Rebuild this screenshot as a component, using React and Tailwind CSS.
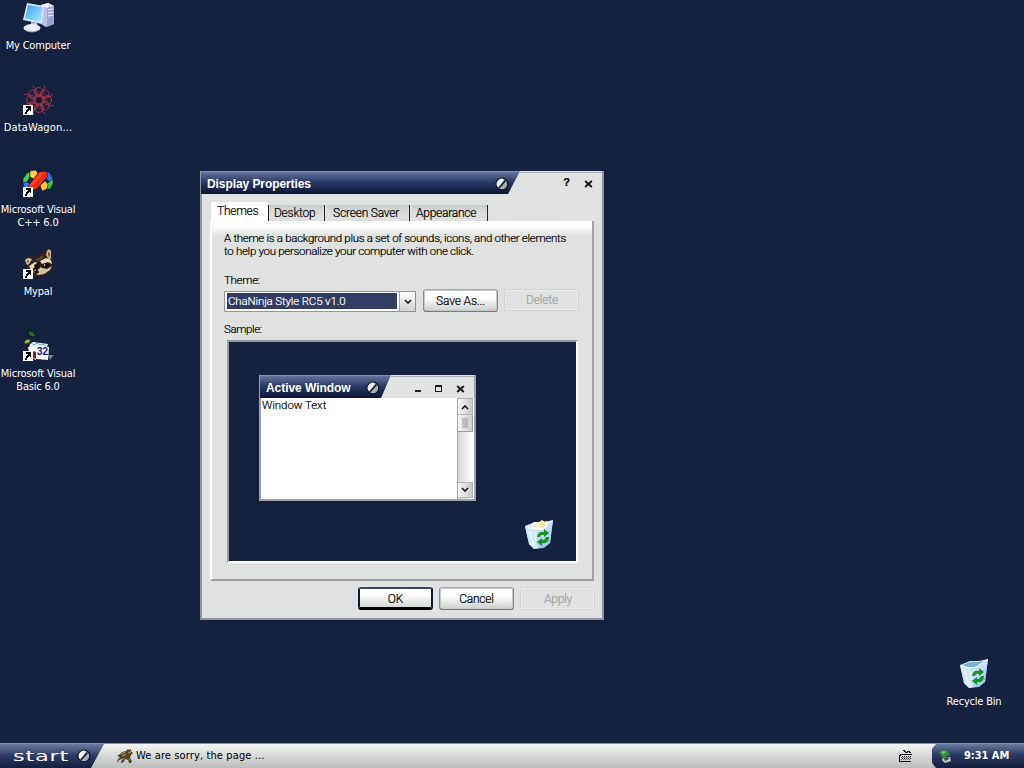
import React from "react";

const TAHOMA = "font-['DejaVu_Sans_Condensed','DejaVu_Sans',sans-serif] font-stretch-condensed";

function ShortcutArrow() {
  return (
    <g shapeRendering="crispEdges">
      <rect x="1" y="21" width="10" height="10" fill="#fff" />
      <path d="M4 22h5v5h-1v-1h-1v1h-1v1h-1v2h-2v-2h1v-2h1v-1h1v-1h-2z" fill="#000" />
    </g>
  );
}

function ComputerIcon() {
  return (
    <svg width="32" height="32" viewBox="0 0 32 32">
      <defs>
        <linearGradient id="scr" x1="0" y1="0" x2="1" y2="1">
          <stop offset="0" stopColor="#3f9cf0" />
          <stop offset="1" stopColor="#a6ecff" />
        </linearGradient>
      </defs>
      <path d="M19 3l7-2 6 3v18l-8 3-5-3z" fill="#b9bfea" />
      <path d="M19 3l7-2 6 3-7 2z" fill="#eef0ff" />
      <path d="M25 6l7-2v18l-7 3z" fill="#9aa2d8" />
      <path d="M26 8l5-1M26 11l5-1M26 14l5-1" stroke="#f1f3ff" strokeWidth="1.2" />
      <path d="M5 1l17 3-2 18L1 18z" fill="#dfe9fb" />
      <path d="M6 3l14.500 2.300-1.700 14.500L3 16.500z" fill="url(#scr)" />
      <path d="M9 20l6 1 1 4-7-1z" fill="#b8c5ec" />
      <ellipse cx="10" cy="26" rx="8.500" ry="4" fill="#e9edfb" />
      <path d="M3 28q7 4 14 0" stroke="#8c9bd0" fill="none" />
    </svg>
  );
}

function DataWagonIcon() {
  const angles = [0, 45, 90, 135, 180, 225, 270, 315];
  return (
    <svg width="32" height="32" viewBox="0 0 32 32">
      <circle cx="17" cy="16" r="11" fill="#4a1f38" opacity="0.400" />
      <g fill="none" stroke="#a5384b" strokeWidth="0.900">
        {angles.map((a) => (
          <g key={a} transform={`rotate(${a} 17 16)`}>
            <circle cx="17" cy="8" r="4.500" />
            <path d="M13 4l-2.500-2M17 12l6-7M14 11h6" />
          </g>
        ))}
      </g>
      <circle cx="17" cy="16" r="2.600" fill="#1b1830" />
      <ShortcutArrow />
    </svg>
  );
}

function VisualCIcon() {
  return (
    <svg width="32" height="32" viewBox="0 0 32 32">
      <g stroke="#0a0f1c" strokeWidth="0.500">
        <path d="M1 13l4-6 3-1v5l-3 5-4 1z" fill="#3fcf52" />
        <path d="M1 17l4-1 4 3-2 4-5-2z" fill="#3a7ff0" />
        <path d="M8 5l6-1 2 4-4 5-4-2z" fill="#ffd052" />
        <path d="M24 5l4 2 3 6-3 3-5-4z" fill="#3272e6" />
        <path d="M31 13v5l-3 5-3 0v-5l3-3z" fill="#35c94a" />
        <path d="M18 19l5-4 3 3-1 5-5 2z" fill="#fcc545" />
        <path d="M6 20L17 6l7-1 2 5-11 13-6 1z" fill="#ed2815" />
      </g>
      <path d="M7 20L18 6.500l5-.5-11 13z" fill="#f9412a" />
      <ShortcutArrow />
    </svg>
  );
}

function RaccoonHead() {
  return (
    <g>
      <path d="M4 19l-2-6 2-4 6 1 6-4 6-1 5-5 3 2v11l1 6-4 6-9 4-8-1z" fill="#33251d" />
      <path d="M25 3l2-2 2 2v7l-2 2-3-5z" fill="#cfb695" />
      <path d="M26 5l1-1 1 3-1 3z" fill="#50392b" />
      <path d="M3 12l3-2 4 1-3 5-2 1z" fill="#d6c09d" />
      <path d="M5 13l2-1-1 3z" fill="#4a3528" />
      <path d="M7 18l6-4 3 1-3 4-4 3z" fill="#e9dac0" />
      <path d="M18 13l6-3 5 2 1 4-4-2-6 2z" fill="#eadbbe" />
      <path d="M16 18l4 2 5 1 5-3-2 4-6 4-6 1-5-3z" fill="#dac29c" />
      <path d="M12 17l5-3 1 6-4 3z" fill="#14110f" />
      <path d="M19 17l6-2 4 2-5 3z" fill="#15110e" />
      <circle cx="22.500" cy="17" r="0.800" fill="#fff" />
      <path d="M12 23l4-1 1 3-4 1z" fill="#181413" />
      <path d="M13 12l6-4 3 0-5 5z" fill="#594231" />
    </g>
  );
}

function MypalIcon() {
  return (
    <svg width="32" height="32" viewBox="0 0 32 32">
      <RaccoonHead />
      <ShortcutArrow />
    </svg>
  );
}

function RunningRaccoon() {
  return (
    <svg width="16" height="16" viewBox="0 0 16 16">
      <path d="M0 8l3-2 2-2 4-1 2-2 1 1 2-1v2l2 2-2 2-1 3 2 3-1 2h-2l-1-3-3-1-1 3-3 1v-1l1-3-3 1-1 2H0l1-3 2-2z" fill="#55452a" />
      <path d="M4 6l4-2M5 8l4-2M11 4l2 1M5 12l2-2M12 11l1 1" stroke="#b5a06c" />
      <path d="M13 4h1" stroke="#f2e7c6" />
    </svg>
  );
}

function VisualBasicIcon() {
  return (
    <svg width="32" height="32" viewBox="0 0 32 32">
      <path d="M6 1l5 1 3 4-3 1-4-2z" fill="#2a6a30" stroke="#07150a" strokeWidth="0.700" />
      <path d="M2 12l3-3 4 1-2 3-4 1z" fill="#a5b545" stroke="#1b240b" strokeWidth="0.700" />
      <path d="M26 25h6l-4 5z" fill="#777b84" />
      <path d="M8 14l3-2 15 2-1 3-18 2z" fill="#eef8fb" />
      <path d="M9 13l3 2 3-2 3 2 3-1 3 2" stroke="#54a7bd" fill="none" />
      <path d="M6 17l8-1v14l-6-3z" fill="#f6f7f8" />
      <path d="M10 21l5 1v7l-5-1z" fill="#74252c" />
      <path d="M14 15l13 2-1 13-12-1z" fill="#fff" />
      <text x="15" y="25" fontSize="10" fontWeight="700" textLength="11" lengthAdjust="spacingAndGlyphs" fontFamily="Liberation Sans, sans-serif" fill="#161477">32</text>
      <ShortcutArrow />
    </svg>
  );
}

function RecycleIcon({ full }) {
  return (
    <svg width="32" height="32" viewBox="0 0 32 32">
      <defs>
        <linearGradient id="bin" x1="0" y1="0" x2="1" y2="1">
          <stop offset="0" stopColor="#ddf6ff" />
          <stop offset="0.550" stopColor="#c3ddf8" />
          <stop offset="1" stopColor="#8db8e9" />
        </linearGradient>
      </defs>
      <path d="M2 7l10-4 9 0 9-2-3 23-6 4-9 1-6-4z" fill="url(#bin)" />
      {!full && <path d="M4 7l9-3 8 0 7-1-8 6-7 1z" fill="#78b0da" />}
      <path d="M2 7q10 4 16 2l12-8-3 23-6 5-10 1-5-5z" fill="url(#bin)" fillOpacity="0.900" />
      <path d="M3 8q9 3 15 1l11-7" fill="none" stroke="#fff" />
      {full && (
        <g>
          <path d="M8 6l3-3 4 1 4-3 3 2 2-1 1 5-6 4-10-1z" fill="#fbfaf3" />
          <path d="M16 4l5-2 2 4-6 3z" fill="#ffe187" />
          <path d="M10 6l4-1 1 3-4 1z" fill="#fff1bd" />
        </g>
      )}
      <path d="M7 12l3 14M12 13l1 9" stroke="#f2faff" strokeWidth="2" opacity="0.700" />
      <path d="M6 25l5-4 5 8-5 1z" fill="#edf5ff" opacity="0.700" />
      <path d="M14 18q1-6 7-5v-3l5 4-5 4v-2q-3-1-4 2z" fill="#159126" />
      <path d="M26 18q0 7-7 6v3l-5-4 5-4v2q3 0 4-3z" fill="#159126" />
    </svg>
  );
}

function Emblem() {
  return (
    <svg width="14" height="14" viewBox="0 0 14 14" className="shrink-0">
      <circle cx="7" cy="7" r="6.500" fill="#0d1322" />
      <circle cx="7" cy="7" r="5.200" fill="#a3abb7" />
      <path d="M2.300 9.500A5.200 5.200 0 0 1 9 2.200L4.500 10z" fill="#f0f3f5" />
      <path d="M10.500 3.500L4 10.800" stroke="#121929" strokeWidth="1.700" />
    </svg>
  );
}

function DesktopIcon({ icon, children, tracking = "tracking-[-0.2px]" }) {
  return (
    <div className="flex h-[82px] w-[76px] flex-col items-center pt-[2px]">
      {icon}
      <div className={`mt-[5px] whitespace-pre text-center text-[11px] leading-[13px] text-white ${tracking} ${TAHOMA}`}>
        {children}
      </div>
    </div>
  );
}

function Cross() {
  return (
    <svg width="9" height="8" viewBox="0 0 9 8">
      <path d="M1.200 1l6.600 6M7.800 1L1.200 7" stroke="#17191c" strokeWidth="2" />
    </svg>
  );
}

function Chevron({ up }) {
  return (
    <svg width="8" height="6" viewBox="0 0 8 6" className={up ? "rotate-180" : ""}>
      <path d="M1 1l3 3 3-3" fill="none" stroke="#17191c" strokeWidth="1.600" />
    </svg>
  );
}

function Caption({ title, className }) {
  return (
    <div className={`flex items-center justify-between border-t border-[#8290ac] bg-linear-to-b from-[#65749a] via-[#2c3b67] via-45% to-[#0c1533] ${className}`}>
      <span className="whitespace-nowrap font-['Liberation_Sans',Arial,sans-serif] text-[12px] font-bold text-white [-webkit-text-stroke:0]">{title}</span>
      <Emblem />
    </div>
  );
}

function Button({ children, kind, className = "" }) {
  const kinds = {
    default: "border-2 border-t-[#3d4672] border-x-[#111a35] border-b-[3px] border-b-black bg-linear-to-b from-white from-30% to-[#d5d9d8] pt-px text-black",
    normal: "border border-[#858b8e] border-t-[#a4a9ac] border-b-2 border-b-[#74797c] bg-linear-to-b from-white from-40% to-[#ced2d1] pt-px text-black outline-1 -outline-offset-2 outline-[#c3c8ca]",
    disabled: "border border-[#d0d4d3] bg-[#dfe2e1] pl-px text-[#a0a4a3] outline-1 -outline-offset-2 outline-[#e9ecec]",
  };
  return (
    <div className={`flex w-[75px] items-center justify-center rounded-[3px] text-[12px] ${kinds[kind]} ${className}`}>
      {children}
    </div>
  );
}

function Tab({ children, className }) {
  return (
    <div className={`flex h-[16px] items-center border-r border-[#222628] bg-linear-to-b from-[#c8cccb] to-[#dcdfde] to-60% whitespace-nowrap ${className}`}>
      {children}
    </div>
  );
}

function SampleWindow() {
  return (
    <div className="absolute left-[30px] top-[33px] flex h-[126px] w-[217px] flex-col border-2 border-t-0 border-[#9ba2a9] bg-[#e0e3e2]">
      <div className="-ml-px flex h-[23px] justify-between">
        <Caption title="Active Window" className="w-[131px] pl-[6px] pr-[11px] pt-px tracking-[-0.05px] [clip-path:polygon(0_0,100%_0,calc(100%-10px)_100%,0_100%)]" />
        <div className="mt-px flex flex-1 items-center justify-end gap-[14px] border-t border-[#a9afb5] pr-[9px] pt-[2px]">
          <div className="mt-[5px] h-[2px] w-[6px] bg-[#222]" />
          <div className="h-[7px] w-[7px] border border-t-2 border-[#17191c]" />
          <Cross />
        </div>
      </div>
      <div className="flex flex-1 bg-white">
        <div className="flex-1 pl-px text-[11.500px] leading-[14px] tracking-[-0.05px]">Window Text</div>
        <div className="mr-px flex w-[16px] flex-col border-l border-[#a4a9a9] bg-linear-to-r from-[#d5d8d7] to-white">
          <div className="flex h-[17px] items-center justify-center border border-l-0 border-[#b1b5b4] bg-linear-to-r from-[#f4f5f5] to-[#c8cccb]"><Chevron up /></div>
          <div className="flex h-[17px] items-center justify-center border-b border-r border-[#999e9d] bg-linear-to-r from-[#f4f5f5] to-[#ccd0cf]">
            <div className="h-[10px] w-[6px] bg-[radial-gradient(circle,#8d9392_0.6px,transparent_0.8px)] bg-size-[2px_2px]" />
          </div>
          <div className="flex-1" />
          <div className="mb-px flex h-[16px] items-center justify-center border border-l-0 border-[#b1b5b4] bg-linear-to-r from-[#f4f5f5] to-[#c8cccb]"><Chevron /></div>
        </div>
      </div>
    </div>
  );
}

function DisplayProperties() {
  return (
    <div className="absolute left-[200px] top-[171px] flex h-[449px] w-[404px] flex-col border-2 border-t-0 border-[#8f969f] bg-[#dfe2e1] font-[Roboto,'Liberation_Sans',sans-serif] text-[12px] font-light text-black [-webkit-text-stroke:0.2px_currentColor]">
      <div className="-ml-px flex h-[23px]">
        <Caption title="Display Properties" className="w-[319px] pl-[6px] pr-[11px] pt-px tracking-[-0.08px] [clip-path:polygon(0_0,100%_0,calc(100%-12px)_100%,0_100%)]" />
        <div className="mt-px flex flex-1 items-center justify-end gap-[14px] border-t border-[#a5abb0] pr-[9px] pt-px">
          <span className="pb-[3px] font-['Liberation_Sans',Arial,sans-serif] text-[11px] font-bold leading-none">?</span>
          <Cross />
        </div>
      </div>
      <div className="ml-[9px] mt-[8px] flex h-[19px] items-end gap-[2px] text-[12px]">
        <div className="-mr-[2px] flex h-[19px] w-[57px] items-center border-t border-white bg-white pb-[2px] pl-[6px] tracking-[-0.25px]">Themes</div>
        <Tab className="w-[57px] border-l pl-[5px] tracking-[-0.25px]">Desktop</Tab>
        <Tab className="w-[83px] pl-[6px] tracking-[-0.2px]">Screen Saver</Tab>
        <Tab className="w-[76px] pl-[4px] tracking-[-0.25px]">Appearance</Tab>
      </div>
      <div className="ml-[8px] flex h-[360px] w-[384px] flex-col border-b-2 border-l-2 border-r-2 border-b-[#979c9d] border-l-white border-r-[#a1a6a7] bg-linear-to-b from-white from-[5px] to-[#dfe2e1] to-[15px] pl-[12px] pt-[11px]">
        <div className="whitespace-nowrap text-[11.500px] leading-[13px] tracking-[-0.3px]">
          A theme is a background plus a set of sounds, icons, and other elements<br />
          to help you personalize your computer with one click.
        </div>
        <div className="mt-[16px] text-[11.500px] leading-[13px] tracking-[-0.3px]">Theme:</div>
        <div className="mt-[2px] flex h-[23px] items-start">
          <div className="mt-[2px] flex h-[21px] w-[192px] border border-[#8f9597] bg-white">
            <div className="m-[2px] mt-px flex w-[170px] items-center bg-[#313d61] pl-px pt-[2px] text-[11.500px] tracking-[-0.15px] text-white">ChaNinja Style RC5 v1.0</div>
            <div className="flex flex-1 items-center justify-center border-l border-[#a2a7a8] bg-linear-to-b from-white to-[#d0d4d3]"><Chevron /></div>
          </div>
          <Button kind="normal" className="ml-[7px] h-[23px] tracking-[-0.15px]">Save As...</Button>
          <Button kind="disabled" className="ml-[6px] h-[22px] tracking-[-0.15px]">Delete</Button>
        </div>
        <div className="mt-[11px] text-[11.500px] leading-[13px] tracking-[-0.4px]">Sample:</div>
        <div className="relative ml-[3px] mt-[4px] h-[223px] w-[351px] border-2 border-b-white border-l-[#959b9f] border-r-white border-t-[#959b9f] bg-[#14213f]">
          <SampleWindow />
          <div className="absolute bottom-[10px] right-[21px]"><RecycleIcon full /></div>
        </div>
      </div>
      <div className="mt-[6px] flex h-[23px] justify-end gap-[6px] pr-[7px]">
        <Button kind="default">OK</Button>
        <Button kind="normal" className="tracking-[-0.2px]">Cancel</Button>
        <Button kind="disabled" className="tracking-[-0.2px]">Apply</Button>
      </div>
    </div>
  );
}

function Taskbar() {
  return (
    <div className="flex h-[25px] shrink-0 items-stretch border-t border-[#8b929a] bg-linear-to-b from-[#f4f5f4] to-[#b9bdbc]">
      <div className="flex w-[104px] items-center justify-between bg-linear-to-b from-[#6b7b9d] via-[#2b3a62] via-50% to-[#141f3e] pl-[13px] pr-[13px] [clip-path:polygon(0_0,100%_0,calc(100%-13px)_100%,0_100%)]">
        <span className="w-[56px] origin-left scale-x-[1.6] font-['DejaVu_Sans',sans-serif] text-[14px] leading-none tracking-[0.5px] text-white">start</span>
        <Emblem />
      </div>
      <div className="flex flex-1 items-center pl-[13px]">
        <RunningRaccoon />
        <span className={`ml-[3px] whitespace-nowrap text-[11px] tracking-[0.12px] text-black ${TAHOMA}`}>We are sorry, the page ...</span>
      </div>
      <div className="flex w-[34px] items-center">
        <svg width="15" height="14" viewBox="0 0 15 14" shapeRendering="crispEdges">
          <path d="M5 1h1v1h1v1h2v-1h2v1h2M1.500 12V6.500h1v-1h11" fill="none" stroke="#17191c" />
          <path d="M1 12.500h12" stroke="#17191c" />
          <path d="M4 7.500h10M4 9.500h10" stroke="#17191c" strokeDasharray="1 1" />
          <path d="M3 8.500h10M3 10.500h10" stroke="#6a6e70" strokeDasharray="1 1" />
        </svg>
      </div>
      <div className="flex w-[92px] items-center bg-linear-to-b from-[#6b7b9d] via-[#2b3a62] via-45% to-[#141f3e] pl-[6px] [clip-path:polygon(4px_0,100%_0,100%_100%,4px_100%,0_78%,0_20%)]">
        <svg width="15" height="15" viewBox="0 0 15 15">
          <path d="M5 8l7 0 1 4-6 2-3-3z" fill="#c4c8c6" />
          <path d="M6 9l4-1 1 2-4 2z" fill="#39433e" />
          <path d="M1 3l5-2 4 1 2 4-4 1-1 2-2 1-2-4z" fill="#2f8f38" />
          <path d="M3 3l3-1 2 1-3 2z" fill="#7fd068" />
        </svg>
        <span className={`ml-[11px] whitespace-nowrap text-[11px] font-bold tracking-[-0.05px] text-white ${TAHOMA}`}>9:31 AM</span>
      </div>
    </div>
  );
}

export default function App() {
  return (
    <div className="relative flex h-[768px] w-[1024px] flex-col overflow-hidden bg-[#14213f]">
      <div className="flex flex-1 flex-col">
        <DesktopIcon icon={<ComputerIcon />}>My Computer</DesktopIcon>
        <DesktopIcon icon={<DataWagonIcon />} tracking="tracking-[0.15px]">DataWagon...</DesktopIcon>
        <DesktopIcon icon={<VisualCIcon />}>{"Microsoft Visual\nC++ 6.0"}</DesktopIcon>
        <DesktopIcon icon={<MypalIcon />}>Mypal</DesktopIcon>
        <DesktopIcon icon={<VisualBasicIcon />}>{"Microsoft Visual\nBasic 6.0"}</DesktopIcon>
      </div>
      <div className="absolute left-[936px] top-[656px]">
        <DesktopIcon icon={<RecycleIcon />}>Recycle Bin</DesktopIcon>
      </div>
      <DisplayProperties />
      <Taskbar />
    </div>
  );
}
